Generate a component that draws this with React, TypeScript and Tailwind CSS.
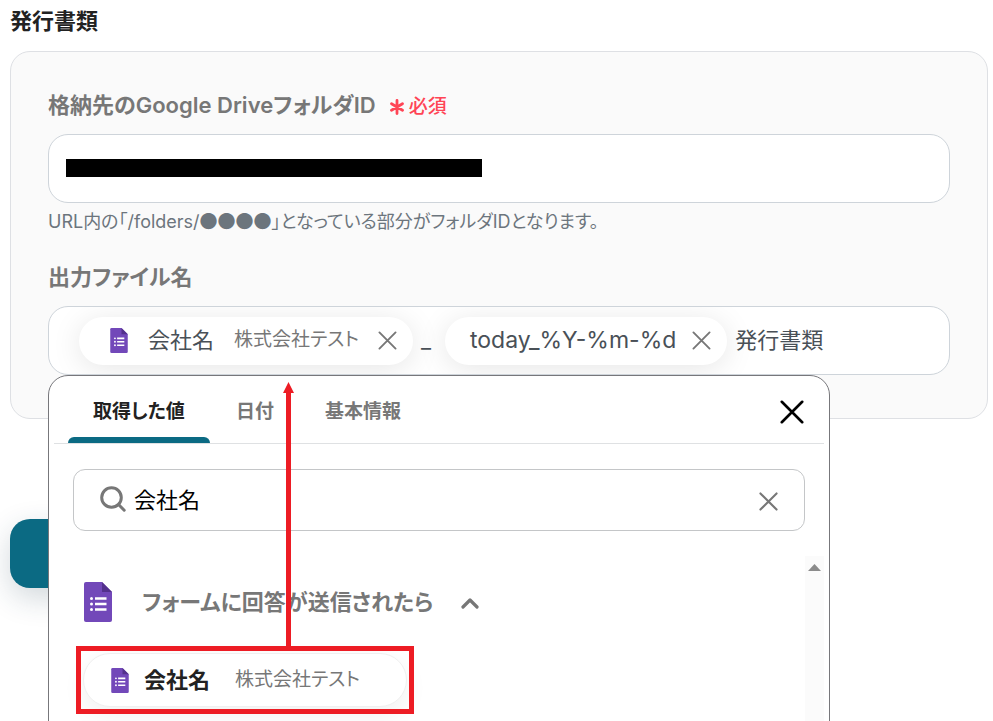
import { useState } from "react";

function FormIcon({ className }: { className: string }) {
  return (
    <svg viewBox="0 0 28 40" className={className} aria-hidden="true">
      <path d="M2 0H18l10 10v28a2 2 0 0 1-2 2H2a2 2 0 0 1-2-2V2a2 2 0 0 1 2-2Z" fill="#7248b9" />
      <path d="M18 0l10 10H18Z" fill="#53318c" />
      <g fill="#fff">
        <circle cx="7.5" cy="16.5" r="1.5" />
        <circle cx="7.5" cy="22" r="1.5" />
        <circle cx="7.5" cy="27.5" r="1.5" />
        <path d="M11 15.2h11.5v2.6H11zM11 20.7h11.5v2.6H11zM11 26.2h11.5v2.6H11z" />
      </g>
    </svg>
  );
}

function CrossIcon({ className, strokeWidth = 2 }: { className: string; strokeWidth?: number }) {
  return (
    <svg viewBox="0 0 20 20" className={className} fill="none" stroke="currentColor" strokeWidth={strokeWidth} strokeLinecap="round" aria-hidden="true">
      <path d="M1.5 1.5l17 17M18.5 1.5l-17 17" />
    </svg>
  );
}

const tabs = ["取得した値", "日付", "基本情報"];

function ValuePicker() {
  const [active, setActive] = useState(0);
  const [query, setQuery] = useState("会社名");
  return (
    <div className="absolute top-full left-0 z-10 h-[420px] w-[782px] rounded-[20px] border border-[#77777b] bg-white px-[5px]">
      <div className="flex h-[68px] items-stretch border-b border-[#dfe1e3] pl-[14px]">
        <div role="tablist" className="flex gap-px">
          {tabs.map((tab, i) => (
            <button
              key={tab}
              type="button"
              role="tab"
              aria-selected={i === active}
              onClick={() => setActive(i)}
              className={
                i === active
                  ? "relative px-[25px] text-[19px] leading-[72px] font-semibold text-[#222]"
                  : "relative px-[25px] text-[19px] leading-[72px] font-semibold text-[#777]"
              }
            >
              {tab}
              {i === active && <span className="absolute inset-x-0 bottom-0 h-[6px] rounded-t-[6px] bg-[#0b6a83]" />}
            </button>
          ))}
        </div>
        <button type="button" aria-label="閉じる" className="mr-[20px] ml-auto pt-[5px] text-black">
          <CrossIcon className="h-[24px] w-[24px]" strokeWidth={2.2} />
        </button>
      </div>

      <div className="mt-[25px] mr-[19px] ml-[19px] flex h-[62px] items-center rounded-[12px] border border-[#c4c6c8] px-[26px]">
        <svg viewBox="0 0 26 26" className="mb-[2px] h-[26px] w-[26px] shrink-0" fill="none" stroke="#777" strokeWidth="3" strokeLinecap="round" aria-hidden="true">
          <circle cx="11.5" cy="11.5" r="9.8" />
          <path d="M18.8 18.8l5.4 5.4" />
        </svg>
        <input
          type="text"
          aria-label="検索"
          value={query}
          onChange={(e) => setQuery(e.target.value)}
          className="ml-[8px] min-w-0 flex-1 text-[22px] text-black outline-none"
        />
        <button type="button" aria-label="検索をクリア" onClick={() => setQuery("")} className="pt-[2px] text-[#777]">
          <CrossIcon className="h-[19px] w-[19px]" strokeWidth={2.2} />
        </button>
      </div>

      <div className="mt-[25px] flex">
        <div className="flex-1 pt-[26px] pl-[29px]">
          <button type="button" aria-expanded="true" className="flex items-center px-px text-[22px] font-semibold text-[#777]">
            <FormIcon className="h-[40px] w-[28px]" />
            <span className="ml-[30px]">フォームに回答が送信されたら</span>
            <svg viewBox="0 0 18 12" className="mt-[2px] ml-[28px] h-[12px] w-[18px]" fill="none" stroke="#777" strokeWidth="3.2" strokeLinecap="round" strokeLinejoin="round" aria-hidden="true">
              <path d="M2 10l7-7 7 7" />
            </svg>
          </button>
          <div className="relative mt-[31px] w-[324px]">
            <button type="button" className="flex h-[54px] w-full items-center rounded-full border border-[#f0f0f0] bg-white pl-[27px] shadow-[0_8px_24px_rgba(0,0,0,0.06)]">
              <FormIcon className="h-[25px] w-[18px]" />
              <span className="ml-[15px] text-[22px] font-semibold text-[#222]">会社名</span>
              <span className="ml-[25px] text-[19px] text-[#777]">株式会社テスト</span>
            </button>
            <div className="pointer-events-none absolute -inset-[7px] border-[5px] border-[#ed1c24]">
              <svg viewBox="0 0 11 269" className="absolute bottom-full left-[202px] h-[269px] w-[11px]" fill="#ed1c24" aria-hidden="true">
                <path d="M5.5 0L11 11H8v258H3V11H0z" />
              </svg>
            </div>
          </div>
        </div>
        <div className="h-[200px] w-[19px] bg-[#fbfbfb] pt-[8px]">
          <svg viewBox="0 0 13 7" className="mx-auto h-[7px] w-[13px]" fill="#8b8b8b" aria-hidden="true">
            <path d="M6.5 0L13 7H0z" />
          </svg>
        </div>
      </div>
    </div>
  );
}

export default function App() {
  const [suffix, setSuffix] = useState("発行書類");
  return (
    <main className="min-h-screen overflow-hidden bg-white pr-[5px] pl-[10px] font-['Inter','Noto_Sans_CJK_JP',sans-serif] [font-feature-settings:'palt']">
      <h1 className="pt-[5px] text-[22px] leading-[32px] font-semibold text-[#222]">発行書類</h1>

      <section className="mt-[14px] rounded-[20px] border border-[#dee0e4] bg-[#fafafa] px-[37px] pt-[37px] pb-[43px]">
        <label htmlFor="folder-id" className="flex items-center text-[22px] leading-[32px] font-semibold text-[#777]">
          格納先のGoogle DriveフォルダID
          <span className="ml-[14px] flex items-center gap-[5px] pt-[4px] text-[19px] leading-[28px] font-medium text-[#ff4455]">
            <svg viewBox="0 0 14 16" className="h-[16px] w-[14px]" stroke="currentColor" strokeWidth="2.8" strokeLinecap="round" aria-hidden="true">
              <path d="M7 1.5v13M1.5 4.7l11 6.6M12.5 4.7l-11 6.6" />
            </svg>
            必須
          </span>
        </label>
        <div className="relative mt-[13px]">
          <input id="folder-id" type="text" className="block h-[69px] w-full rounded-[20px] border border-[#ced4da] bg-white px-[18px] text-[22px] outline-none" />
          <span className="absolute top-[25px] left-[18px] h-[18px] w-[416px] bg-black" />
        </div>
        <p className="mt-[5px] text-[18px] leading-[28px] text-[#6c757d]">
          URL内の「/folders/<span className="font-['Noto_Sans_CJK_JP',sans-serif] leading-none">●●●●</span>」となっている部分がフォルダIDとなります。
        </p>

        <label htmlFor="file-name" className="mt-[25px] block text-[22px] leading-[32px] font-semibold text-[#777]">
          出力ファイル名
        </label>
        <div className="relative mt-[13px]">
          <div className="flex h-[69px] items-center overflow-hidden rounded-[20px] border border-[#ced4da] bg-white pl-[30px] text-[22px] text-[#495057]">
            <span className="flex h-[48px] shrink-0 items-center rounded-full bg-white pr-[16px] pl-[31px] shadow-[0_4px_30px_rgba(0,0,0,0.1)]">
              <FormIcon className="h-[25px] w-[18px]" />
              <span className="ml-[20px]">会社名</span>
              <span className="ml-[20px] text-[19px] text-[#777]">株式会社テスト</span>
              <button type="button" aria-label="会社名を削除" className="ml-[19px] text-[#777]">
                <CrossIcon className="h-[19px] w-[19px]" />
              </button>
            </span>
            <span className="mr-[14px] ml-[8px]">_</span>
            <span className="flex h-[48px] shrink-0 items-center rounded-full bg-white pr-[16px] pl-[25px] shadow-[0_4px_30px_rgba(0,0,0,0.1)]">
              <span className="text-[23px]">today_%Y-%m-%d</span>
              <button type="button" aria-label="日付を削除" className="ml-[16px] text-[#777]">
                <CrossIcon className="h-[19px] w-[19px]" />
              </button>
            </span>
            <input
              id="file-name"
              type="text"
              value={suffix}
              onChange={(e) => setSuffix(e.target.value)}
              className="relative ml-[8px] min-w-0 flex-1 bg-transparent outline-none"
            />
          </div>
          <ValuePicker />
        </div>
      </section>

      <button type="button" aria-label="保存する" className="mt-[100px] block h-[69px] w-[240px] rounded-[20px] bg-[#0b6a83] shadow-[0_10px_30px_rgba(30,60,80,0.2)]" />
    </main>
  );
}
